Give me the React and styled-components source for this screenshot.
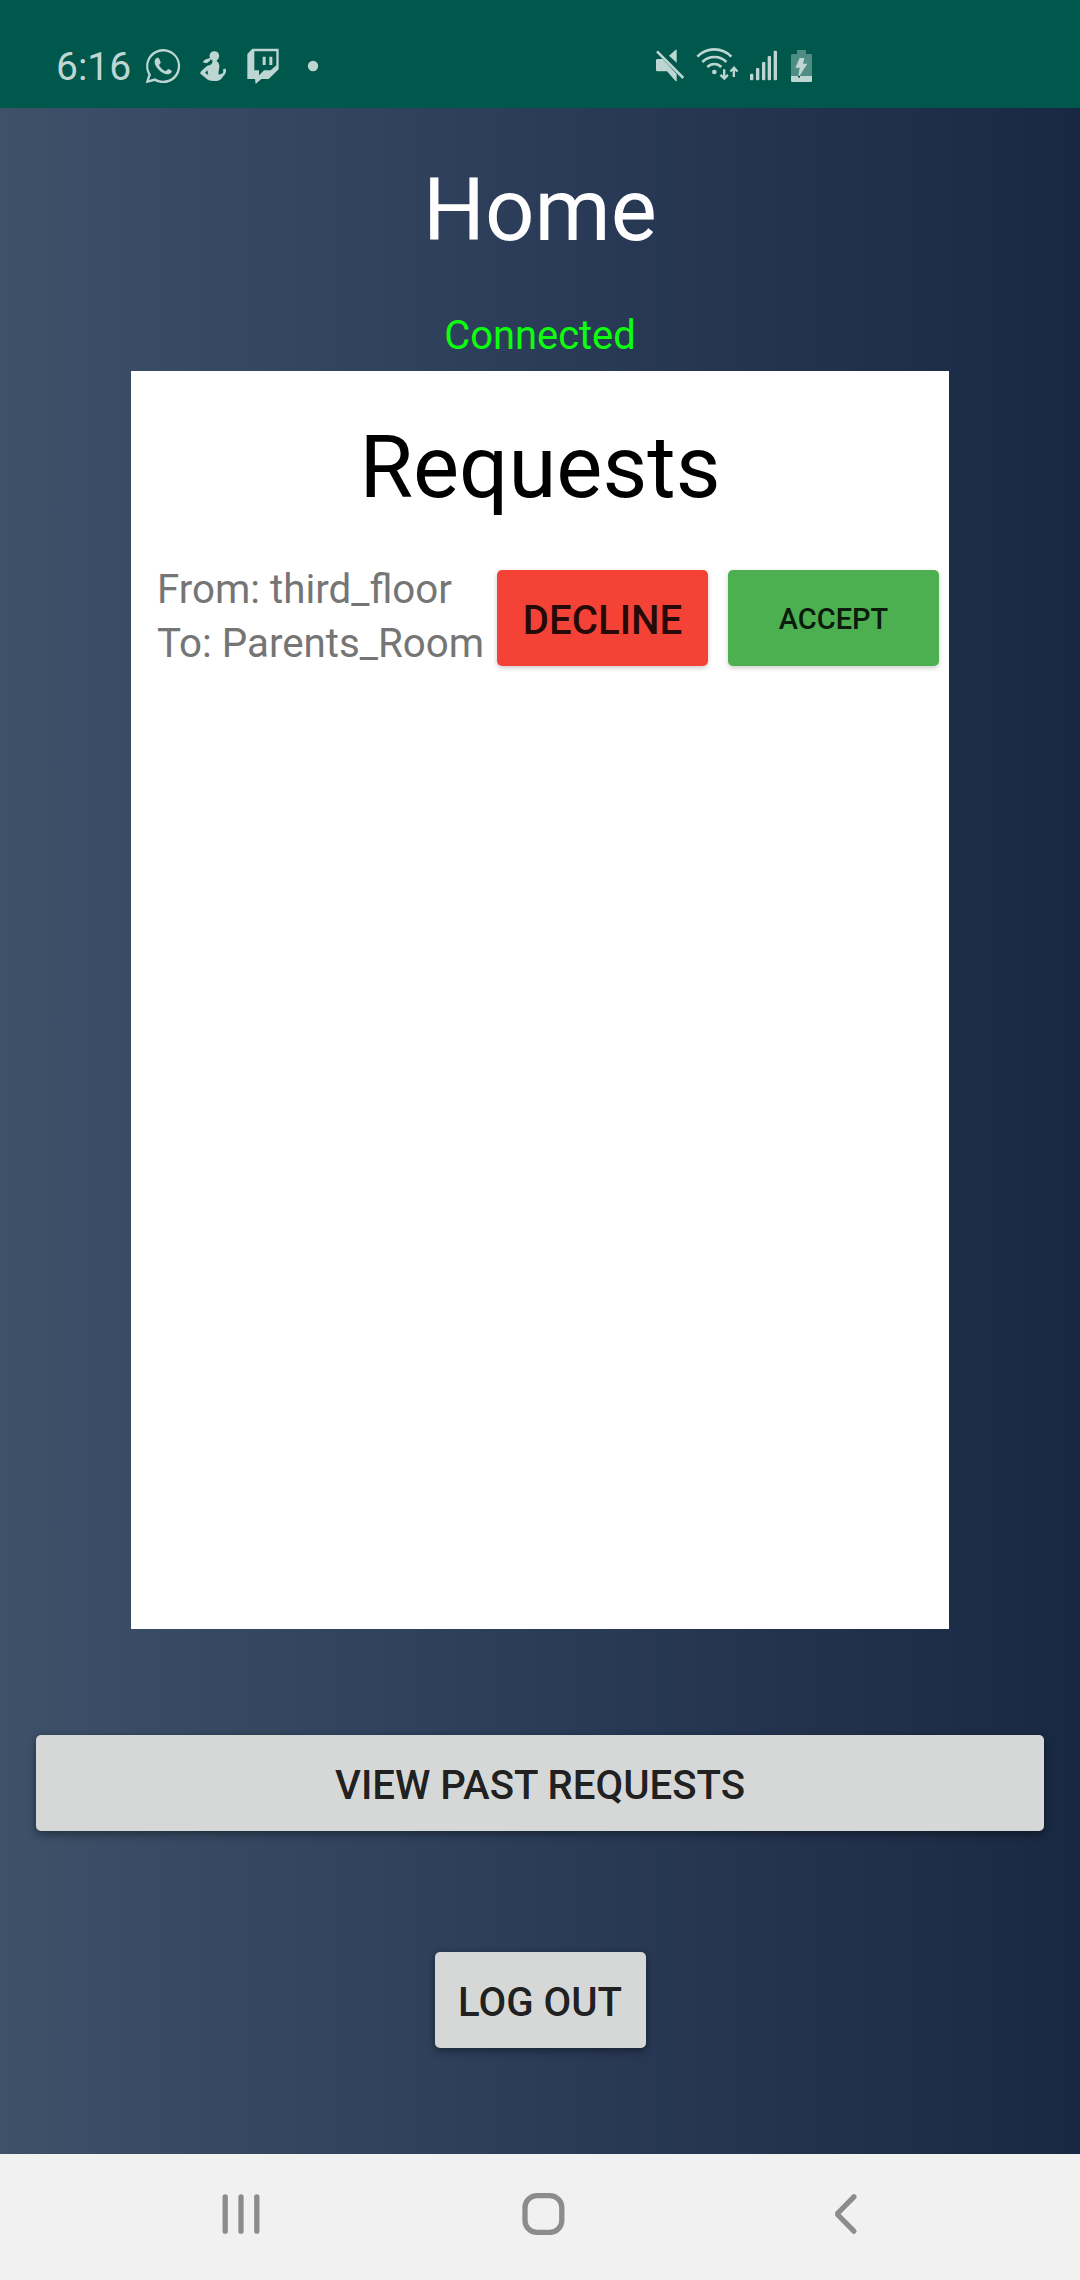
import React from "react";
import styled, { createGlobalStyle } from "styled-components";

const GlobalStyle = createGlobalStyle`
  * { box-sizing: border-box; }
  html, body { margin: 0; padding: 0; }
  body { font-family: Roboto, "Noto Sans", sans-serif; }
`;

const Screen = styled.div`
  width: 1080px;
  height: 2280px;
  display: flex;
  flex-direction: column;
  overflow: hidden;
`;

const StatusBar = styled.header`
  flex: none;
  height: 108px;
  padding: 40px 266px 8px 56px;
  display: flex;
  justify-content: space-between;
  background: #00574b;
  color: #bdd6d2;
`;

const StatusGroup = styled.div`
  display: flex;
  align-items: flex-start;
`;

const Clock = styled.span`
  width: 87px;
  font-size: 39px;
  line-height: 55px;
  white-space: nowrap;
`;

const Glyph = styled.svg`
  display: block;
  flex: none;
  height: 60px;
  width: ${(p) => p.$w}px;
  margin-left: ${(p) => p.$gap || 0}px;
  fill: currentColor;
`;

const Body = styled.main`
  flex: 1;
  min-height: 0;
  display: flex;
  flex-direction: column;
  align-items: center;
  background: linear-gradient(90deg, #3d5169 0%, #2b3c58 50%, #192842 100%);
`;

const Title = styled.h1`
  margin: 0;
  font-size: 86.9px;
  font-weight: 400;
  line-height: 120px;
  color: ${(p) => p.$color};
`;

const PageTitle = styled(Title)`
  margin-top: 42px;
`;

const Connection = styled.p`
  margin: 40px 0 10px;
  font-size: 39.9px;
  line-height: 51px;
  color: #0dff0d;
`;

const Card = styled.section`
  width: 818px;
  height: 1258px;
  padding: 36px 10px 0 26px;
  display: flex;
  flex-direction: column;
  background: #fff;
`;

const CardTitle = styled(Title)`
  margin-right: 16px;
  text-align: center;
`;

const RequestRow = styled.div`
  margin-top: 36px;
  display: flex;
  align-items: flex-start;
  justify-content: space-between;
`;

const Route = styled.div`
  font-size: 40.3px;
  line-height: 54px;
  color: #757575;
  white-space: nowrap;
`;

const Actions = styled.div`
  padding-top: 7px;
  display: flex;
  gap: 20px;
`;

const Button = styled.button`
  width: ${(p) => p.$w || 211}px;
  height: 96px;
  margin: 0;
  padding: ${(p) => (p.$small ? 3 : 7)}px 0 0;
  border: 0;
  border-radius: 5px;
  background: ${(p) => p.$bg || "#d6d8d7"};
  color: rgba(0, 0, 0, 0.87);
  font-family: inherit;
  font-size: ${(p) => (p.$small ? 29 : 40.2)}px;
  font-weight: 500;
  line-height: 1.2;
  white-space: nowrap;
  box-shadow: ${(p) =>
    p.$bg
      ? "0 2px 5px rgba(0, 0, 0, 0.2)"
      : "0 4px 8px rgba(0, 0, 0, 0.32), 0 0 4px rgba(0, 0, 0, 0.12)"};
`;

const Footer = styled.div`
  margin-top: 106px;
  display: flex;
  flex-direction: column;
  align-items: center;
  gap: 121px;
`;

const NavBar = styled.nav`
  flex: none;
  height: 126px;
  padding: 36px 217px 0 218px;
  display: flex;
  justify-content: space-between;
  background: #f1f1f1;
  color: #8c8c8c;
`;

const NavIcon = styled.svg`
  display: block;
  width: 48px;
  height: 48px;
  fill: none;
  stroke: currentColor;
  stroke-width: 5.3;
  stroke-linecap: round;
`;

const ChatIcon = () => (
  <Glyph $w={40} viewBox="309 30 120 180">
    <path
      fillRule="evenodd"
      d="M317 160 L325 134 C314 114 317 90 332 73 C350 54 380 51 401 68 C422 85 427 115 412 137 C397 159 368 165 344 153 Z M327 150 L345 145 C363 156 387 154 402 138 C417 122 418 96 403 79 C388 63 362 60 344 73 C323 88 319 114 333 134 Z"
    />
    <path d="M350 84 C354 82 357 84 358 87 L362 97 C363 100 358 103 357 106 C362 115 369 120 377 124 C380 122 382 117 386 117 L395 122 C397 125 392 131 387 132 C378 135 366 129 357 120 C348 111 343 103 344 93 C345 88 347 86 350 84 Z" />
  </Glyph>
);

const FigureIcon = () => (
  <Glyph $w={30} $gap={15} viewBox="474 30 90 180">
    <circle cx="523" cy="78" r="14.5" />
    <path d="M514 82 L504 86 C498 86 492 90 488 97 L500 100 L510 92 Z" />
    <path d="M517 88 L531 88 L530 93 C538 98 540 108 537 117 L535 133 C541 134 547 132 550 127 L549 119 C551 115 558 116 558 120 C559 130 552 136 546 144 C541 152 533 153 522 153 C509 153 502 150 497 144 L481 131 C480 128 482 125 485 122 L501 108 L512 104 C518 100 518 94 517 88 Z" />
    <path d="M495 128 L502 121 L505 135 Z" fill="#00574b" />
  </Glyph>
);

const StreamIcon = () => (
  <Glyph $w={35} $gap={17} viewBox="615 30 105 180">
    <path
      fillRule="evenodd"
      d="M637 56 L716 56 L716 118 L686 147 L664 147 L647 162 L645 147 L622 147 L622 72 Z M643 64 L643 121 L657 121 L657 136 L672 121 L692 121 L709 106 L709 64 Z"
    />
    <path d="M668 80 h9 v25 h-9 Z M688 80 h9 v25 h-9 Z" />
  </Glyph>
);

const MoreDot = () => (
  <Glyph $w={14} $gap={26} viewBox="798 30 42 180">
    <circle cx="819" cy="108" r="15.5" />
  </Glyph>
);

const MuteIcon = () => (
  <Glyph $w={32} viewBox="72 30 96 180">
    <path d="M78 91 Q78 87 82 87 L98 87 L140 132 L140 154 L137 154 L111 124 L82 124 Q78 124 78 120 Z" />
    <path d="M117 77 L137 59 L140 59 L140 98 Z" />
    <path d="M81 64 L160 144" fill="none" stroke="currentColor" strokeWidth="8" />
  </Glyph>
);

const WifiIcon = () => (
  <Glyph $w={45} $gap={9} viewBox="195 30 135 180">
    <g fill="none" stroke="currentColor" strokeWidth="8">
      <path d="M202 80 C230 51 276 51 304 80" />
      <path d="M217 96 C237 76 270 76 289 96" />
      <path d="M232 111 C244 99 262 99 274 111" />
    </g>
    <circle cx="253" cy="126" r="7" />
    <path d="M279 118 h7 v19 l6 -5 l4 5 l-13 14 l-14 -14 l5 -5 l5 5 Z" />
    <path d="M308 141 h7 v-19 l6 5 l4 -5 l-13 -14 l-13 14 l4 5 l5 -5 Z" />
  </Glyph>
);

const SignalIcon = () => (
  <Glyph $w={31} $gap={8} viewBox="354 30 93 180">
    <rect x="360" y="131" width="10" height="20" rx="3" />
    <rect x="378" y="114" width="10" height="37" rx="3" />
    <rect x="396" y="96" width="10" height="55" rx="3" />
    <rect x="413" y="78" width="10" height="73" rx="3" />
    <rect x="431" y="62" width="10" height="89" rx="3" />
  </Glyph>
);

const BatteryIcon = () => (
  <Glyph $w={25} $gap={10} viewBox="477 30 75 180">
    <path
      opacity="0.42"
      d="M501 60 h27 v12 h14 q4 0 4 4 v62 h-63 v-62 q0 -4 4 -4 h14 Z"
    />
    <path d="M483 138 h63 v14 q0 4 -4 4 h-55 q-4 0 -4 -4 Z" />
    <path d="M509 84 h14 l-4 17 h13 l-24 38 h-3 l4 -26 h-13 Z" />
    <circle cx="507" cy="140" r="3" fill="#0b3b34" />
  </Glyph>
);

const requests = [{ from: "third_floor", to: "Parents_Room" }];

export default function App() {
  return (
    <Screen>
      <GlobalStyle />
      <StatusBar>
        <StatusGroup>
          <Clock>6:16</Clock>
          <ChatIcon />
          <FigureIcon />
          <StreamIcon />
          <MoreDot />
        </StatusGroup>
        <StatusGroup>
          <MuteIcon />
          <WifiIcon />
          <SignalIcon />
          <BatteryIcon />
        </StatusGroup>
      </StatusBar>
      <Body>
        <PageTitle $color="#fff">Home</PageTitle>
        <Connection>Connected</Connection>
        <Card>
          <CardTitle as="h2" $color="#000">Requests</CardTitle>
          {requests.map((r) => (
            <RequestRow key={r.from}>
              <Route>
                <div>From: {r.from}</div>
                <div>To: {r.to}</div>
              </Route>
              <Actions>
                <Button $bg="#f44336">DECLINE</Button>
                <Button $bg="#4caf50" $small>ACCEPT</Button>
              </Actions>
            </RequestRow>
          ))}
        </Card>
        <Footer>
          <Button $w={1008}>VIEW PAST REQUESTS</Button>
          <Button>LOG OUT</Button>
        </Footer>
      </Body>
      <NavBar>
        <NavIcon viewBox="0 0 48 48">
          <path d="M7.2 6.8 V41.2 M23 6.8 V41.2 M38.8 6.8 V41.2" />
        </NavIcon>
        <NavIcon viewBox="0 0 48 48">
          <rect x="8" y="5.6" width="36.8" height="36.8" rx="12" />
        </NavIcon>
        <NavIcon viewBox="0 0 48 48">
          <path d="M38.9 6.9 L22 24 L38.9 41.1" strokeLinejoin="bevel" />
        </NavIcon>
      </NavBar>
    </Screen>
  );
}
